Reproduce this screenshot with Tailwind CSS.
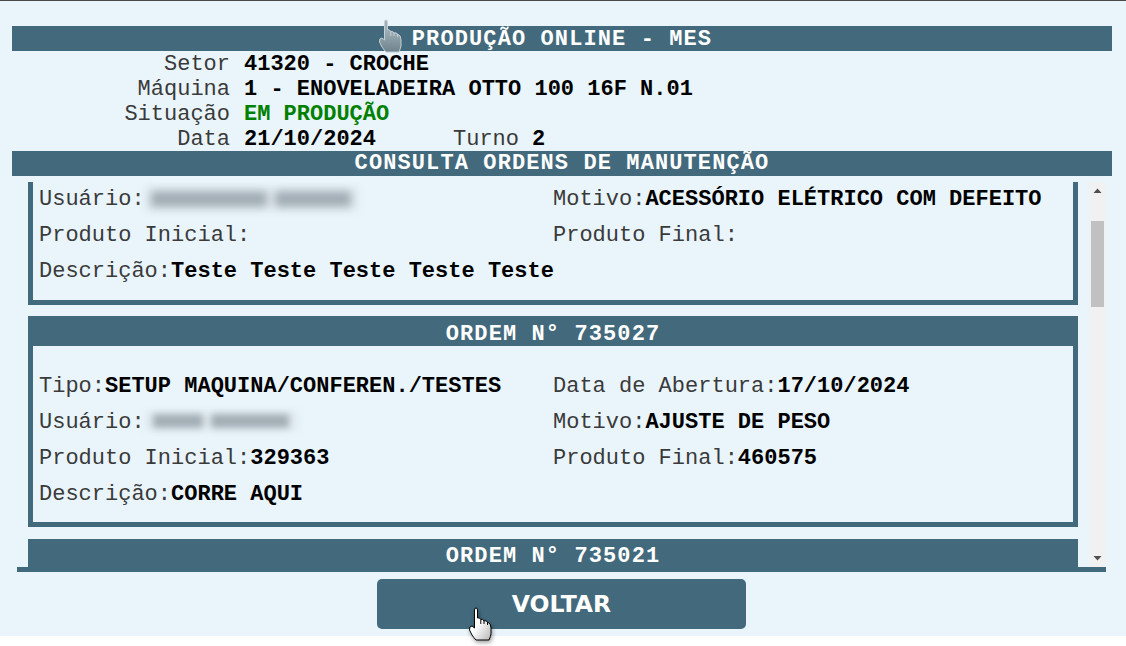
<!DOCTYPE html>
<html lang="en">
<head>
    <meta charset="UTF-8">
    <title>Produção Online - MES</title>
    <script src="https://cdn.jsdelivr.net/npm/@tailwindcss/browser@4"></script>
</head>
<body class="relative h-[646px] overflow-hidden bg-white font-['Liberation_Mono',monospace] text-[22px] leading-[25px] text-[#3a3a3a]">
    <div class="h-[636px] border-t border-[#4a4a4a] bg-[#e9f5fb] pt-[25px]">
        <h1 class="mr-[14px] ml-3 h-[25px] bg-[#436a7c] text-center font-bold leading-[27px] tracking-[1.1px] text-white">PRODUÇÃO ONLINE - MES</h1>
        <div class="grid auto-rows-[25px] grid-cols-[218px_1fr] gap-x-[14px] pl-3 leading-[27px]">
            <span class="text-right">Setor</span><b class="text-black">41320 - CROCHE</b>
            <span class="text-right">Máquina</span><b class="text-black">1 - ENOVELADEIRA OTTO 100 16F N.01</b>
            <span class="text-right">Situação</span><b class="text-[#008000]">EM PRODUÇÃO</b>
            <span class="text-right">Data</span>
            <div class="flex"><b class="w-[209px] text-black">21/10/2024</b><span class="w-[79px]">Turno</span><b class="text-black">2</b></div>
        </div>
        <h2 class="mr-[14px] ml-3 h-[25px] bg-[#436a7c] text-center font-bold leading-[25px] tracking-[1.1px] text-white">CONSULTA ORDENS DE MANUTENÇÃO</h2>

        <div class="mx-[17px] mt-[6px] flex h-[390px] w-[1089px] border-b-[5px] border-[#436a7c]">
            <div class="h-full w-[1072px] overflow-hidden pl-[11px]">
                <!-- first card is scrolled, its top is out of view -->
                <section class="h-[123px] w-[1050px] border-x-[5px] border-b-[5px] border-[#436a7c]">
                    <div class="grid grid-cols-2 leading-[36px]">
                        <div class="flex pl-[6px]"><span>Usuário:</span><span class="my-[5px] flex h-[24px] w-[213px] items-center gap-[8px] bg-[#dfe9ee] px-[6px] blur-[4px]"><i class="h-[16px] w-[116px] bg-[#a3adb5]"></i><i class="h-[16px] w-[76px] bg-[#a3adb5]"></i></span></div>
                        <div><span>Motivo:</span><b class="text-black">ACESSÓRIO ELÉTRICO COM DEFEITO</b></div>
                        <div class="pl-[6px]">Produto Inicial:</div>
                        <div>Produto Final:</div>
                        <div class="col-span-2 pl-[6px]"><span>Descrição:</span><b class="text-black">Teste Teste Teste Teste Teste</b></div>
                    </div>
                </section>

                <section class="mt-[11px] h-[211px] w-[1050px] border-x-[5px] border-b-[5px] border-[#436a7c]">
                    <h3 class="-mx-[5px] h-[30px] bg-[#436a7c] text-center font-bold leading-[37px] tracking-[1.1px] text-white">ORDEM N° 735027</h3>
                    <div class="grid grid-cols-2 pt-[23px] leading-[36px]">
                        <div class="pl-[6px]"><span>Tipo:</span><b class="text-black">SETUP MAQUINA/CONFEREN./TESTES</b></div>
                        <div><span>Data de Abertura:</span><b class="text-black">17/10/2024</b></div>
                        <div class="flex pl-[6px]"><span>Usuário:</span><span class="my-[6px] flex h-[20px] w-[153px] items-center gap-[8px] bg-[#e1ebf0] px-[8px] blur-[3.5px]"><i class="h-[14px] w-[50px] bg-[#a3adb5]"></i><i class="h-[14px] w-[78px] bg-[#a3adb5]"></i></span></div>
                        <div><span>Motivo:</span><b class="text-black">AJUSTE DE PESO</b></div>
                        <div class="pl-[6px]"><span>Produto Inicial:</span><b class="text-black">329363</b></div>
                        <div><span>Produto Final:</span><b class="text-black">460575</b></div>
                        <div class="col-span-2 pl-[6px]"><span>Descrição:</span><b class="text-black">CORRE AQUI</b></div>
                    </div>
                </section>

                <section class="mt-[12px] w-[1050px]">
                    <h3 class="h-[28px] bg-[#436a7c] text-center font-bold leading-[35px] tracking-[1.1px] text-white">ORDEM N° 735021</h3>
                </section>
            </div>
            <!-- scrollbar -->
            <div class="flex h-[385px] w-[17px] flex-col items-center bg-[#f1f1f1]">
                <svg class="mt-[6px]" width="9" height="5" viewBox="0 0 9 5"><path d="M4.5 0.5 8.5 5H0.5Z" fill="#505050"/></svg>
                <div class="mt-[28px] h-[86px] w-[13px] bg-[#c1c1c1]"></div>
                <svg class="mt-auto mb-[6px]" width="9" height="5" viewBox="0 0 9 5"><path d="M4.5 4.5 8.5 0H0.5Z" fill="#505050"/></svg>
            </div>
        </div>

        <button class="mt-[7px] ml-[377px] block h-[50px] w-[369px] rounded-[5px] bg-[#436a7c] font-['DejaVu_Sans',sans-serif] text-[23.5px] font-bold text-white">VOLTAR</button>
    </div>

    <!-- mouse cursors in the screenshot -->
    <svg class="absolute top-[19px] left-[379px]" width="24" height="36" viewBox="0 0 24 36"><defs><linearGradient id="ghost" x1="0" y1="0" x2="0" y2="1"><stop offset="0.3" stop-color="#9fb0b8"/><stop offset="1" stop-color="#6f838c"/></linearGradient></defs><path d="M5.5 3Q5.500 1 7 1T8.500 3V11Q10.500 10 11.800 12.500 13.800 11.500 15 14 17 13 18.500 15 22 16 22 21V27Q21.500 29.500 20 33H7Q5 31 3 28L0.500 23Q0 19 3 19L5.500 21ZM11.800 12.500V17M15 14V17M18.500 15V18" fill="url(#ghost)" stroke="#c3d0d6"/></svg>
    <svg class="absolute top-[607px] left-[469px] drop-shadow-[1px_2px_2px_rgba(0,0,0,0.4)]" width="24" height="36" viewBox="0 0 24 36"><defs><linearGradient id="hand" x1="0" y1="0" x2="1" y2="1"><stop offset="0.45" stop-color="#fff"/><stop offset="1" stop-color="#b5b5b5"/></linearGradient></defs><path d="M5.5 3Q5.500 1 7 1T8.500 3V11Q10.500 10 11.800 12.500 13.800 11.500 15 14 17 13 18.500 15 22 16 22 21V27Q21.500 29.500 20 33H7Q5 31 3 28L0.500 23Q0 19 3 19L5.500 21ZM11.800 12.500V17M15 14V17M18.500 15V18" fill="url(#hand)" stroke="#000" stroke-width="1"/></svg>
</body>
</html>
